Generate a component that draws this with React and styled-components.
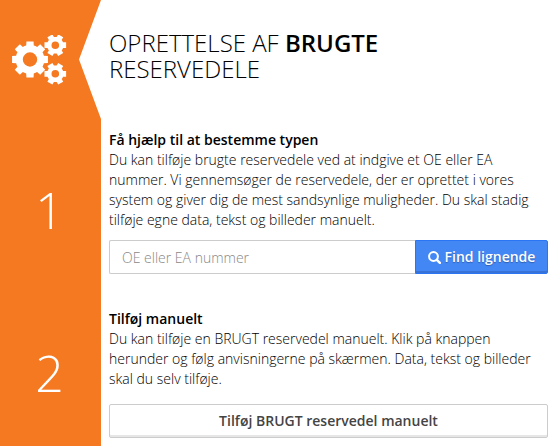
import React from "react";
import styled, { createGlobalStyle } from "styled-components";

const ORANGE = "#f57921";

const GlobalStyle = createGlobalStyle`
  *, *::before, *::after { box-sizing: border-box; }
  body {
    margin: 0;
    background: #fff;
    color: #000;
    font: 300 14px/20px "Open Sans", sans-serif;
  }
`;

const Page = styled.main`
  min-height: 100vh;
  display: flex;
  flex-direction: column;
  background: linear-gradient(to right, ${ORANGE} 101px, #fff 101px);
`;

const Row = styled.section`
  display: grid;
  grid-template-columns: 101px minmax(0, 1fr);
`;

const Header = styled(Row).attrs({ as: "header" })`
  min-height: 119px;
  background: #fff;
`;

const Arrow = styled.div`
  display: flex;
  align-items: center;
  padding-left: 12px;
  background: ${ORANGE};
  clip-path: polygon(0 0, 100% 0, 79px 50%, 100% 100%, 0 100%);
`;

const Title = styled.h1`
  margin: 0;
  padding: 30px 7px 0 8px;
  max-width: 340px;
  font-size: 24px;
  line-height: 26px;
  font-weight: 300;
  text-transform: uppercase;

  strong { font-weight: 600; }
`;

const Number = styled.div`
  display: flex;
  align-items: center;
  justify-content: center;
  padding: 2px 2px 0 0;
  font-size: 50px;
  line-height: 68px;
  color: #fff;
`;

const Content = styled.div`
  padding: 11px 7px ${(p) => (p.$last ? 8 : 24)}px 8px;
`;

const StepTitle = styled.h2`
  margin: 0;
  font-size: 14px;
  line-height: 20px;
  font-weight: 600;
`;

const Text = styled.p`
  margin: 0;
`;

const SearchForm = styled.form`
  display: flex;
  margin-top: 10px;
`;

const SearchInput = styled.input`
  flex: 1;
  min-width: 0;
  height: 34px;
  padding: 0 12px;
  border: 1px solid #ccc;
  border-right: 0;
  border-radius: 2px 0 0 2px;
  background: #fff;
  color: #333;
  font: inherit;

  &::placeholder { color: #888; opacity: 1; }
`;

const Button = styled.button`
  height: 34px;
  display: flex;
  align-items: center;
  justify-content: center;
  gap: 4px;
  padding: 0 12px;
  font: 600 14px/20px "Open Sans", sans-serif;
  cursor: pointer;
`;

const PrimaryButton = styled(Button)`
  flex: none;
  width: 133px;
  border: 1px solid #2a75f3;
  border-radius: 0 2px 2px 0;
  background: #4387f5;
  box-shadow: inset 0 -2px 0 #3872d6;
  color: #fff;
  white-space: nowrap;
  text-shadow: 0 1px 1px rgba(0, 0, 0, 0.3);

  svg { flex: none; }
`;

const WideButton = styled(Button)`
  width: 100%;
  margin-top: 15px;
  border: 1px solid #ccc;
  border-radius: 2px;
  background: #fff;
  box-shadow: inset 0 -2px 0 #e6e6e6;
  color: #444;
`;

function gearPath(cx, cy, teeth, outer, inner, hole) {
  const step = (Math.PI * 2) / teeth;
  const at = (r, a) =>
    `${(cx + r * Math.cos(a)).toFixed(2)} ${(cy + r * Math.sin(a)).toFixed(2)}`;
  let d = "";
  for (let i = 0; i < teeth; i += 1) {
    const a = i * step;
    d += `${i ? "L" : "M"}${at(inner, a - step * 0.34)}`;
    d += `L${at(outer, a - step * 0.25)}L${at(outer, a + step * 0.25)}`;
    d += `L${at(inner, a + step * 0.34)}`;
    d += `A${inner} ${inner} 0 0 1 ${at(inner, a + step * 0.66)}`;
  }
  return `${d}ZM${cx + hole} ${cy}A${hole} ${hole} 0 1 0 ${cx - hole} ${cy}A${hole} ${hole} 0 1 0 ${cx + hole} ${cy}Z`;
}

const GEARS = [
  gearPath(18, 24.5, 8, 18.3, 14.4, 7.2),
  gearPath(43.3, 10.2, 6, 11.2, 8.3, 3.8),
  gearPath(43.3, 38.8, 6, 11.2, 8.3, 3.8),
].join("");

function GearsIcon() {
  return (
    <svg width="55" height="50" viewBox="0 0 55 50" fill="#fff" aria-hidden="true">
      <path fillRule="evenodd" d={GEARS} />
    </svg>
  );
}

function SearchIcon() {
  return (
    <svg width="13" height="13" viewBox="0 0 13 13" fill="none" stroke="#fff" aria-hidden="true">
      <circle cx="5.5" cy="5.5" r="4.4" strokeWidth="2" />
      <path d="M8.8 8.8L11.9 11.9" strokeWidth="2.4" strokeLinecap="round" />
    </svg>
  );
}

function Step({ number, title, text, last, children }) {
  return (
    <Row>
      <Number>{number}</Number>
      <Content $last={last}>
        <StepTitle>{title}</StepTitle>
        <Text>{text}</Text>
        {children}
      </Content>
    </Row>
  );
}

export default function App() {
  return (
    <>
      <GlobalStyle />
      <Page>
        <Header>
          <Arrow>
            <GearsIcon />
          </Arrow>
          <Title>
            Oprettelse af <strong>brugte</strong> reservedele
          </Title>
        </Header>
        <Step
          number="1"
          title="Få hjælp til at bestemme typen"
          text="Du kan tilføje brugte reservedele ved at indgive et OE eller EA nummer. Vi gennemsøger de reservedele, der er oprettet i vores system og giver dig de mest sandsynlige muligheder. Du skal stadig tilføje egne data, tekst og billeder manuelt."
        >
          <SearchForm onSubmit={(e) => e.preventDefault()}>
            <SearchInput
              type="text"
              aria-label="OE eller EA nummer"
              placeholder="OE eller EA nummer"
            />
            <PrimaryButton type="submit">
              <SearchIcon />
              Find lignende
            </PrimaryButton>
          </SearchForm>
        </Step>
        <Step
          number="2"
          last
          title="Tilføj manuelt"
          text="Du kan tilføje en BRUGT reservedel manuelt. Klik på knappen herunder og følg anvisningerne på skærmen. Data, tekst og billeder skal du selv tilføje."
        >
          <WideButton type="button">Tilføj BRUGT reservedel manuelt</WideButton>
        </Step>
      </Page>
    </>
  );
}
